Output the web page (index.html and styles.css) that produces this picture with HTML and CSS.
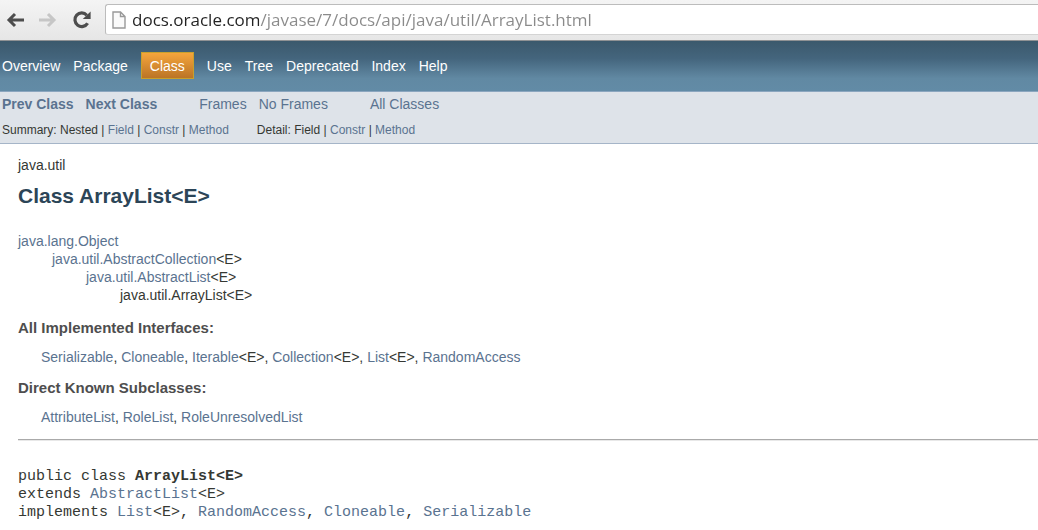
FILE: index.html
```html
<!DOCTYPE html>
<html lang="en">
<head>
<meta charset="utf-8">
<title>ArrayList (Java Platform SE 7)</title>
<link rel="stylesheet" href="styles.css">
</head>
<body>
<header class="toolbar">
  <button class="tool" type="button" aria-label="Back">
    <svg width="18" height="18" viewBox="0 0 18 18"><path d="M9 3 3 9l6 6M3.5 9H18" fill="none" stroke="#4d4d4d" stroke-width="3"/></svg>
  </button>
  <button class="tool" type="button" aria-label="Forward">
    <svg width="18" height="18" viewBox="0 0 18 18"><path d="M9 3l6 6-6 6M14.5 9H0" fill="none" stroke="#c6c6c6" stroke-width="3"/></svg>
  </button>
  <button class="tool" type="button" aria-label="Reload">
    <svg width="20" height="20" viewBox="0 0 20 20"><path d="M15.6 13.2A6.8 6.8 0 1 1 14.8 5.2" fill="none" stroke="#4d4d4d" stroke-width="3.2"/><path d="M18.6 1.6V9h-7.8z" fill="#4d4d4d"/></svg>
  </button>
  <div class="address">
    <svg width="14" height="18" viewBox="0 0 14 18"><path d="M1 1h7.5L13 5.5V17H1zM8.5 1v4.5H13" fill="#fafafa" stroke="#999" stroke-width="1.4"/></svg>
    <input class="url" type="text" aria-label="Address" value="docs.oracle.com/javase/7/docs/api/java/util/ArrayList.html">
  </div>
</header>

<nav class="top-nav" aria-label="Main">
  <ul class="nav-list">
    <li><a href="#overview">Overview</a></li>
    <li><a href="#package">Package</a></li>
    <li class="current">Class</li>
    <li><a href="#use">Use</a></li>
    <li><a href="#tree">Tree</a></li>
    <li><a href="#deprecated">Deprecated</a></li>
    <li><a href="#index">Index</a></li>
    <li><a href="#help">Help</a></li>
  </ul>
</nav>

<nav class="sub-nav" aria-label="Class">
  <div class="sub-row links">
    <div class="group"><a class="strong" href="#prev">Prev Class</a><a class="strong" href="#next">Next Class</a></div>
    <div class="group"><a href="#frames">Frames</a><a href="#noframes">No Frames</a></div>
    <div class="group"><a href="#all">All Classes</a></div>
  </div>
  <div class="sub-row details">
    <div>Summary: Nested | <a href="#field">Field</a> | <a href="#constr">Constr</a> | <a href="#method">Method</a></div>
    <div>Detail: Field | <a href="#constr-detail">Constr</a> | <a href="#method-detail">Method</a></div>
  </div>
</nav>

<main class="content">
  <div class="package">java.util</div>
  <h1 class="title">Class ArrayList&lt;E&gt;</h1>
  <ul class="inheritance">
    <li><a href="#object">java.lang.Object</a>
      <ul>
        <li><a href="#collection">java.util.AbstractCollection</a>&lt;E&gt;
          <ul>
            <li><a href="#list">java.util.AbstractList</a>&lt;E&gt;
              <ul><li>java.util.ArrayList&lt;E&gt;</li></ul>
            </li>
          </ul>
        </li>
      </ul>
    </li>
  </ul>
  <dl class="facts">
    <dt>All Implemented Interfaces:</dt>
    <dd><a href="#s">Serializable</a>, <a href="#c">Cloneable</a>, <a href="#i">Iterable</a>&lt;E&gt;, <a href="#co">Collection</a>&lt;E&gt;, <a href="#l">List</a>&lt;E&gt;, <a href="#r">RandomAccess</a></dd>
    <dt>Direct Known Subclasses:</dt>
    <dd><a href="#al">AttributeList</a>, <a href="#rl">RoleList</a>, <a href="#rul">RoleUnresolvedList</a></dd>
  </dl>
  <hr class="rule">
  <pre class="signature">public class <b>ArrayList&lt;E&gt;</b>
extends <a href="#ext">AbstractList</a>&lt;E&gt;
implements <a href="#il">List</a>&lt;E&gt;, <a href="#ir">RandomAccess</a>, <a href="#ic">Cloneable</a>, <a href="#is">Serializable</a></pre>
</main>
</body>
</html>
```
FILE: styles.css
```css
* { box-sizing: border-box; }

body {
  margin: 0;
  background: #fff;
  color: #353833;
  font: 14px/18px "Liberation Sans", Arial, sans-serif;
}

a { color: #5a7390; text-decoration: none; }
ul, dl, dd { margin: 0; padding: 0; list-style: none; }

.toolbar {
  display: flex;
  align-items: center;
  gap: 13px;
  height: 41px;
  padding: 4px 0 5px 6px;
  background: linear-gradient(#f4f4f4, #e6e6e6);
  border-bottom: 1px solid #8f9294;
}
.tool {
  display: flex;
  width: 20px;
  padding: 0;
  border: 0;
  background: none;
}
.address {
  display: flex;
  flex: 1;
  align-items: center;
  align-self: stretch;
  gap: 6px;
  padding-left: 6px;
  background: #fff;
  border: 1px solid #bcbcbc;
  border-width: 1px 0 1px 1px;
  border-bottom-color: #d4d4d4;
  border-radius: 3px 0 0 3px;
}
.url {
  flex: 1;
  min-width: 0;
  padding: 0;
  border: 0;
  outline: 0;
  background: linear-gradient(90deg, #222 127px, #8a8a8a 127px);
  background-clip: text;
  color: transparent;
  font: 17px/24px "Open Sans", "Noto Sans", sans-serif;
}

.top-nav {
  padding: 11px 2px 12px;
  background: linear-gradient(#3b596c, #44657d 35%, #6189a3 75%, #628ba6);
  border-bottom: 1px solid #8ba6bf;
}
.nav-list {
  display: flex;
  flex-wrap: wrap;
  align-items: center;
  gap: 13px;
  color: #fff;
}
.nav-list a { color: #fff; }
.current {
  padding: 4px 8px 3px;
  border: 1px solid #c9a02c;
  background: linear-gradient(#f5a53c, #bb7426);
}

.sub-nav {
  padding: 3px 2px 4px;
  background: #dee3e9;
  border-bottom: 1px solid #a5b5c8;
}
.sub-row { display: flex; flex-wrap: wrap; }
.links { gap: 42px; }
.details { gap: 28px; margin-top: 8px; font-size: 12px; }
.group { display: flex; gap: 12px; }
.strong { font-weight: bold; }

.content { padding: 12px 0 8px 18px; }
.title {
  margin: 10px 0 24px;
  color: #2c4557;
  font-size: 21px;
  line-height: 24px;
}
.inheritance { margin-bottom: 15px; }
.inheritance ul { padding-left: 34px; }
.facts dt {
  margin-bottom: 11px;
  color: #4e4e4e;
  font-size: 15px;
  font-weight: bold;
}
.facts dd { margin: 0 0 13px 23px; }
.rule {
  margin: 0;
  border: 0;
  border-top: 1px solid #aaa;
  border-bottom: 1px solid #e8e8e8;
}
.signature {
  margin: 27px 0 0;
  font: 15px/18px "Liberation Mono", "Courier New", monospace;
}
```
